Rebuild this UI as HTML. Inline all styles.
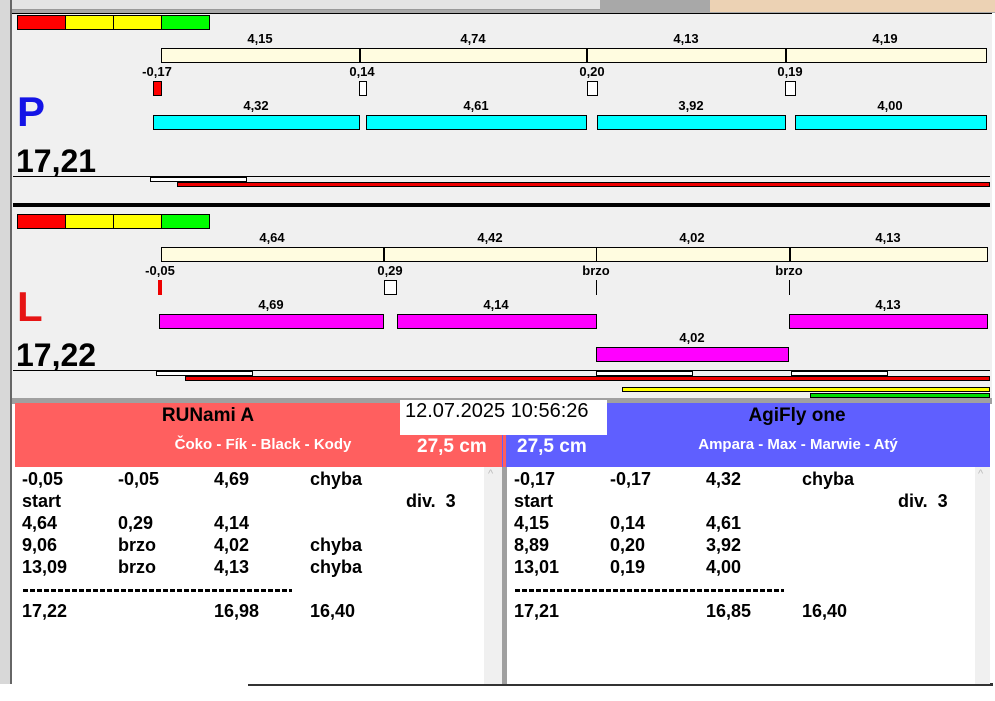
<!DOCTYPE html><html><head><meta charset="utf-8"><style>
body{margin:0;width:995px;height:701px;overflow:hidden;background:#fff;font-family:"Liberation Sans",Arial,sans-serif;position:relative}
div{position:absolute;box-sizing:border-box}
.t{font-weight:bold;font-size:13px;color:#000;white-space:nowrap;transform:translateX(-50%)}
.bx{border:1px solid #000}
.r{font-weight:bold;font-size:18px;white-space:nowrap}
.d{height:3px;width:269px;background:repeating-linear-gradient(90deg,#000 0 5px,transparent 5px 7px)}
</style></head><body>
<div style="left:0;top:0;width:995px;height:13px;background:#a8a8a8"></div>
<div style="left:710px;top:0;width:285px;height:12px;background:#ecd2b4"></div>
<div style="left:10px;top:0;width:590px;height:10px;background:#e4e4e4;border-bottom:1px solid #999"></div>
<div style="left:0;top:0;width:12px;height:701px;background:#d8d8d8;border-right:2px solid #666"></div>
<div style="left:12px;top:13px;width:980px;height:390px;background:#f0f0f0;border-top:1px solid #000"></div>
<div style="left:0;top:684px;width:995px;height:17px;background:#fff"></div>
<div style="left:248px;top:683px;width:745px;height:3px;background:#333"></div>

<!-- P panel -->
<div class="bx" style="left:17px;top:15px;width:49px;height:15px;background:#f00"></div>
<div class="bx" style="left:65px;top:15px;width:49px;height:15px;background:#ff0"></div>
<div class="bx" style="left:113px;top:15px;width:49px;height:15px;background:#ff0"></div>
<div class="bx" style="left:161px;top:15px;width:49px;height:15px;background:#0f0"></div>
<div class="bx" style="left:161px;top:48px;width:826px;height:15px;background:#fffce0"></div>
<div style="left:359px;top:48px;width:2px;height:15px;background:#000"></div>
<div style="left:586px;top:48px;width:2px;height:15px;background:#000"></div>
<div style="left:785px;top:48px;width:2px;height:15px;background:#000"></div>
<div class="t" style="left:260px;top:31px">4,15</div><div class="t" style="left:473px;top:31px">4,74</div><div class="t" style="left:686px;top:31px">4,13</div><div class="t" style="left:885px;top:31px">4,19</div>
<div class="t" style="left:157px;top:64px">-0,17</div><div class="t" style="left:362px;top:64px">0,14</div><div class="t" style="left:592px;top:64px">0,20</div><div class="t" style="left:790px;top:64px">0,19</div>
<div class="bx" style="left:153px;top:81px;width:9px;height:15px;background:#f00"></div>
<div class="bx" style="left:359px;top:81px;width:8px;height:15px;background:#fff"></div>
<div class="bx" style="left:587px;top:81px;width:11px;height:15px;background:#fff"></div>
<div class="bx" style="left:785px;top:81px;width:11px;height:15px;background:#fff"></div>
<div style="left:17px;top:88px;font-size:42px;font-weight:bold;color:#1414e6">P</div>
<div class="t" style="left:256px;top:98px">4,32</div><div class="t" style="left:476px;top:98px">4,61</div><div class="t" style="left:691px;top:98px">3,92</div><div class="t" style="left:890px;top:98px">4,00</div>
<div class="bx" style="left:153px;top:115px;width:207px;height:15px;background:#0ff"></div>
<div class="bx" style="left:366px;top:115px;width:221px;height:15px;background:#0ff"></div>
<div class="bx" style="left:597px;top:115px;width:189px;height:15px;background:#0ff"></div>
<div class="bx" style="left:795px;top:115px;width:192px;height:15px;background:#0ff"></div>
<div style="left:16px;top:143px;font-size:32px;font-weight:bold">17,21</div>
<div style="left:13px;top:176px;width:977px;height:1px;background:#000"></div>
<div class="bx" style="left:150px;top:177px;width:97px;height:5px;background:#fff"></div>
<div class="bx" style="left:177px;top:182px;width:813px;height:5px;background:#e00"></div>
<div style="left:13px;top:203px;width:977px;height:4px;background:#000"></div>

<!-- L panel -->
<div class="bx" style="left:17px;top:214px;width:49px;height:15px;background:#f00"></div>
<div class="bx" style="left:65px;top:214px;width:49px;height:15px;background:#ff0"></div>
<div class="bx" style="left:113px;top:214px;width:49px;height:15px;background:#ff0"></div>
<div class="bx" style="left:161px;top:214px;width:49px;height:15px;background:#0f0"></div>
<div class="bx" style="left:161px;top:247px;width:827px;height:15px;background:#fffce0"></div>
<div style="left:383px;top:247px;width:2px;height:15px;background:#000"></div>
<div style="left:596px;top:247px;width:1px;height:15px;background:#000"></div>
<div style="left:789px;top:247px;width:2px;height:15px;background:#000"></div>
<div class="t" style="left:272px;top:230px">4,64</div><div class="t" style="left:490px;top:230px">4,42</div><div class="t" style="left:692px;top:230px">4,02</div><div class="t" style="left:888px;top:230px">4,13</div>
<div class="t" style="left:160px;top:263px">-0,05</div><div class="t" style="left:390px;top:263px">0,29</div><div class="t" style="left:596px;top:263px">brzo</div><div class="t" style="left:789px;top:263px">brzo</div>
<div style="left:158px;top:280px;width:4px;height:15px;background:#e00"></div>
<div class="bx" style="left:384px;top:280px;width:13px;height:15px;background:#fff"></div>
<div style="left:596px;top:280px;width:1px;height:15px;background:#000"></div>
<div style="left:789px;top:280px;width:1px;height:15px;background:#000"></div>
<div style="left:17px;top:283px;font-size:42px;font-weight:bold;color:#e61414">L</div>
<div class="t" style="left:271px;top:297px">4,69</div><div class="t" style="left:496px;top:297px">4,14</div><div class="t" style="left:888px;top:297px">4,13</div>
<div class="bx" style="left:159px;top:314px;width:225px;height:15px;background:#f0f"></div>
<div class="bx" style="left:397px;top:314px;width:200px;height:15px;background:#f0f"></div>
<div class="bx" style="left:789px;top:314px;width:199px;height:15px;background:#f0f"></div>
<div class="t" style="left:692px;top:330px">4,02</div>
<div class="bx" style="left:596px;top:347px;width:193px;height:15px;background:#f0f"></div>
<div style="left:16px;top:337px;font-size:32px;font-weight:bold">17,22</div>
<div style="left:13px;top:370px;width:977px;height:1px;background:#000"></div>
<div class="bx" style="left:156px;top:371px;width:97px;height:5px;background:#fff"></div>
<div class="bx" style="left:596px;top:371px;width:97px;height:5px;background:#fff"></div>
<div class="bx" style="left:791px;top:371px;width:97px;height:5px;background:#fff"></div>
<div class="bx" style="left:185px;top:376px;width:805px;height:5px;background:#e00"></div>
<div class="bx" style="left:622px;top:387px;width:368px;height:5px;background:#ff0"></div>
<div class="bx" style="left:810px;top:393px;width:180px;height:5px;background:#0d0"></div>
<div style="left:12px;top:398px;width:980px;height:6px;background:#a0a0a0"></div>

<!-- headers -->
<div style="left:15px;top:403px;width:487px;height:64px;background:#ff5f5f"></div>
<div style="left:502px;top:403px;width:488px;height:64px;background:#5f5fff"></div>
<div style="left:503px;top:433px;width:3px;height:34px;background:#ff5f5f"></div>
<div style="left:208px;top:405px;font-size:19px;font-weight:bold;transform:translateX(-50%)">RUNami A</div>
<div style="left:263px;top:436px;font-size:15px;font-weight:bold;color:#fff;transform:translateX(-50%);white-space:nowrap">Čoko - Fík - Black - Kody</div>
<div style="left:417px;top:436px;font-size:19px;font-weight:bold;color:#fff">27,5 cm</div>
<div style="left:797px;top:405px;font-size:19px;font-weight:bold;transform:translateX(-50%);white-space:nowrap">AgiFly one</div>
<div style="left:798px;top:436px;font-size:15px;font-weight:bold;color:#fff;transform:translateX(-50%);white-space:nowrap">Ampara - Max - Marwie - Atý</div>
<div style="left:517px;top:436px;font-size:19px;font-weight:bold;color:#fff">27,5 cm</div>
<div style="left:400px;top:400px;width:207px;height:35px;background:#fff"></div>
<div style="left:405px;top:400px;font-size:20px;white-space:nowrap">12.07.2025 10:56:26</div>

<!-- lists -->
<div style="left:15px;top:467px;width:469px;height:217px;background:#fff"></div>
<div style="left:484px;top:467px;width:18px;height:217px;background:#f0f0f0"></div>
<div style="left:502px;top:467px;width:5px;height:217px;background:#a0a0a0"></div>
<div style="left:507px;top:467px;width:468px;height:217px;background:#fff"></div>
<div style="left:975px;top:467px;width:15px;height:217px;background:#f0f0f0"></div>
<div style="left:488px;top:468px;font-size:11px;color:#bbb">^</div>
<div style="left:978px;top:468px;font-size:11px;color:#bbb">^</div>

<div class="r" style="left:22px;top:469px">-0,05</div><div class="r" style="left:118px;top:469px">-0,05</div><div class="r" style="left:214px;top:469px">4,69</div><div class="r" style="left:310px;top:469px">chyba</div>
<div class="r" style="left:22px;top:491px">start</div><div class="r" style="left:406px;top:491px">div.&nbsp; 3</div>
<div class="r" style="left:22px;top:513px">4,64</div><div class="r" style="left:118px;top:513px">0,29</div><div class="r" style="left:214px;top:513px">4,14</div>
<div class="r" style="left:22px;top:535px">9,06</div><div class="r" style="left:118px;top:535px">brzo</div><div class="r" style="left:214px;top:535px">4,02</div><div class="r" style="left:310px;top:535px">chyba</div>
<div class="r" style="left:22px;top:557px">13,09</div><div class="r" style="left:118px;top:557px">brzo</div><div class="r" style="left:214px;top:557px">4,13</div><div class="r" style="left:310px;top:557px">chyba</div>
<div class="d" style="left:23px;top:589px"></div>
<div class="r" style="left:22px;top:601px">17,22</div><div class="r" style="left:214px;top:601px">16,98</div><div class="r" style="left:310px;top:601px">16,40</div>

<div class="r" style="left:514px;top:469px">-0,17</div><div class="r" style="left:610px;top:469px">-0,17</div><div class="r" style="left:706px;top:469px">4,32</div><div class="r" style="left:802px;top:469px">chyba</div>
<div class="r" style="left:514px;top:491px">start</div><div class="r" style="left:898px;top:491px">div.&nbsp; 3</div>
<div class="r" style="left:514px;top:513px">4,15</div><div class="r" style="left:610px;top:513px">0,14</div><div class="r" style="left:706px;top:513px">4,61</div>
<div class="r" style="left:514px;top:535px">8,89</div><div class="r" style="left:610px;top:535px">0,20</div><div class="r" style="left:706px;top:535px">3,92</div>
<div class="r" style="left:514px;top:557px">13,01</div><div class="r" style="left:610px;top:557px">0,19</div><div class="r" style="left:706px;top:557px">4,00</div>
<div class="d" style="left:515px;top:589px"></div>
<div class="r" style="left:514px;top:601px">17,21</div><div class="r" style="left:706px;top:601px">16,85</div><div class="r" style="left:802px;top:601px">16,40</div>
</body></html>
